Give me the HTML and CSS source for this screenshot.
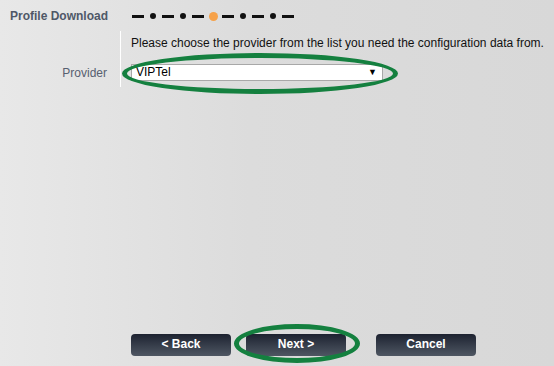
FILE: index.html
```html
<!DOCTYPE html>
<html>
<head>
<meta charset="utf-8">
<link rel="stylesheet" href="styles.css">
</head>
<body>
<div class="page">
  <header class="header">
    <h1 class="title">Profile Download</h1>
    <div class="steps">
      <span class="dash"></span><span class="dot"></span>
      <span class="dash"></span><span class="dot"></span>
      <span class="dash"></span><span class="dot current"></span>
      <span class="dash"></span><span class="dot"></span>
      <span class="dash"></span><span class="dot"></span>
      <span class="dash"></span>
    </div>
  </header>
  <div class="form">
    <div class="label-cell"></div>
    <div class="field-cell intro">Please choose the provider from the list you need the configuration data from.</div>
    <div class="label-cell label">Provider</div>
    <div class="field-cell field">
      <div class="marked">
        <div class="select"><span>VIPTel</span><span class="arrow">▼</span></div>
        <span class="ring ring-select"></span>
      </div>
    </div>
  </div>
  <div class="buttons">
    <button class="btn btn-back">&lt; Back</button>
    <div class="marked btn-next-wrap">
      <button class="btn">Next &gt;</button>
      <span class="ring ring-next"></span>
    </div>
    <button class="btn btn-cancel">Cancel</button>
  </div>
</div>
</body>
</html>
```
FILE: styles.css
```css
* { box-sizing: border-box; }
html, body { margin: 0; padding: 0; }
body {
  font-family: "Liberation Sans", Arial, sans-serif;
  font-size: 12px;
  background: linear-gradient(to right, #e8e8e8 0%, #dcdcdc 45%, #d8d8d8 100%);
  width: 554px;
  height: 366px;
  overflow: hidden;
}
.page {
  height: 366px;
  display: flex;
  flex-direction: column;
}
.header {
  display: flex;
  align-items: center;
  height: 31px;
  padding-left: 10px;
  padding-top: 1px;
}
.title {
  margin: 0;
  font-size: 12px;
  font-weight: bold;
  color: #4f5868;
  width: 122px;
}
.steps {
  display: flex;
  align-items: center;
  gap: 6px;
}
.dash {
  width: 12px;
  height: 3px;
  background: #111;
}
.dot {
  width: 6px;
  height: 6px;
  border-radius: 50%;
  background: #111;
}
.dot.current {
  width: 9px;
  height: 9px;
  margin: 0 -1.5px;
  background: #f6a24a;
}
.form {
  display: grid;
  grid-template-columns: 120px 1fr;
}
.field-cell {
  border-left: 1px solid #ffffff;
  padding-left: 10px;
}
.intro {
  padding-top: 5px;
  line-height: 14px;
  color: #111;
}
.field {
  padding-top: 14px;
  padding-bottom: 6px;
}
.label {
  display: flex;
  align-items: center;
  justify-content: flex-end;
  padding-right: 13px;
  padding-top: 12px;
  padding-bottom: 4px;
  color: #576070;
}
.marked {
  position: relative;
}
.select {
  width: 252px;
  height: 17px;
  background: #fff;
  border: 1px solid #a8a8a8;
  display: flex;
  align-items: center;
  justify-content: space-between;
  padding: 0 5px 0 4px;
  color: #000;
  line-height: 15px;
}
.arrow {
  font-size: 9px;
}
.ring {
  position: absolute;
  border: 5px solid #14803f;
  border-radius: 50%;
  pointer-events: none;
}
.ring-select {
  left: -9px;
  top: -11px;
  width: 276px;
  height: 41px;
}
.buttons {
  margin-top: auto;
  display: flex;
  align-items: center;
  padding-left: 131px;
  padding-bottom: 10px;
}
.btn {
  width: 100px;
  height: 22px;
  border: none;
  border-radius: 4px;
  background: linear-gradient(to bottom, #1d2230 0%, #363d4a 50%, #4e5662 100%);
  color: #fff;
  font-family: "Liberation Sans", Arial, sans-serif;
  font-size: 12px;
  font-weight: bold;
  padding: 0 0 2px 0;
  display: block;
}
.btn-next-wrap {
  margin-left: 15px;
}
.btn-cancel {
  margin-left: 30px;
}
.ring-next {
  left: -12px;
  top: -10px;
  width: 126px;
  height: 39px;
}
```
